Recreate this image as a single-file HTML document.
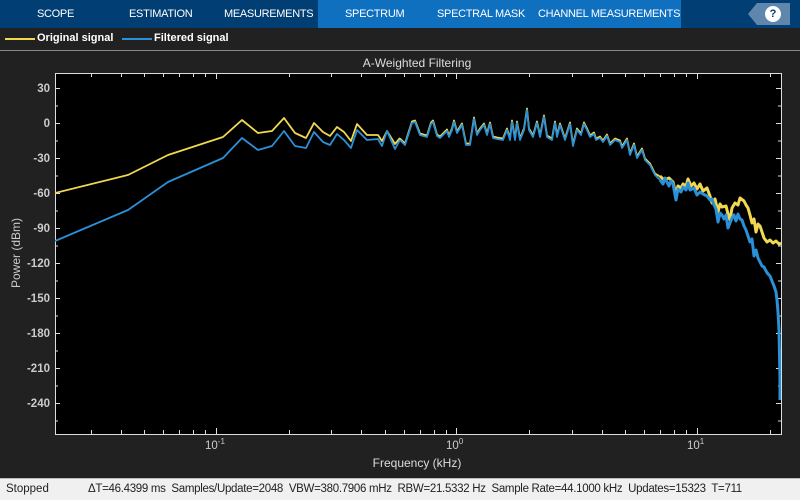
<!DOCTYPE html>
<html><head><meta charset="utf-8"><style>
*{margin:0;padding:0;box-sizing:border-box}
body{width:800px;height:500px;background:#212121;font-family:"Liberation Sans",sans-serif;overflow:hidden;position:relative}
.tb{position:absolute;left:0;top:0;width:800px;height:28px;background:#003e73}
.act{position:absolute;left:318px;top:0;width:363px;height:28px;background:#1070c0}
.tab{position:absolute;top:8px;color:#fff;font-size:11px;letter-spacing:-0.3px}
.help{position:absolute;left:757px;top:3px;width:33px;height:22px;background:#5f87ad}
.help:before{content:"";position:absolute;left:-9px;top:0;border-right:9px solid #5f87ad;border-top:11px solid transparent;border-bottom:11px solid transparent}
.q{position:absolute;left:8px;top:3px;width:16px;height:16px;border-radius:50%;background:#fff;color:#003e73;font-size:11px;font-weight:bold;text-align:center;line-height:16px}
.leg{position:absolute;top:32px;color:#fff;font-size:11px;font-weight:bold}
.sep{position:absolute;left:0;top:50px;width:800px;height:1px;background:#8a8a8a}
.status{position:absolute;left:0;top:478px;width:800px;height:22px;background:#f0f0f0;border-top:1px solid #bbb;font-size:11.5px;color:#222;white-space:nowrap}
</style></head><body>
<div class="tb"></div><div class="act"></div>
<div class="tab" style="left:37px">SCOPE</div>
<div class="tab" style="left:129px">ESTIMATION</div>
<div class="tab" style="left:224px">MEASUREMENTS</div>
<div class="tab" style="left:345px">SPECTRUM</div>
<div class="tab" style="left:437px">SPECTRAL MASK</div>
<div class="tab" style="left:538px">CHANNEL MEASUREMENTS</div>
<div class="help"><div class="q">?</div></div>
<div style="position:absolute;left:5px;top:38px;width:30px;height:2px;background:#f0d850"></div>
<div class="leg" style="left:37px">Original signal</div>
<div style="position:absolute;left:122px;top:38px;width:30px;height:2px;background:#2a90d8"></div>
<div class="leg" style="left:154px">Filtered signal</div>
<div class="sep"></div>
<svg width="800" height="478" style="position:absolute;left:0;top:0" font-family="Liberation Sans, sans-serif">
<text x="417" y="67" fill="#ddd" font-size="12" text-anchor="middle">A-Weighted Filtering</text>
<rect x="55" y="73" width="726" height="361" fill="#131313"/>
<g stroke="#4a4a4a" stroke-width="1">
<path d="M55 88.5H781M55 123.5H781M55 158.5H781M55 193.5H781M55 228.5H781M55 263.5H781M55 298.5H781M55 333.5H781M55 368.5H781M55 403.5H781M216.5 73V434M456.5 73V434M697.5 73V434"/>
</g>
<g stroke="#ddd" stroke-width="1">
<path d="M55.5 73V434.5H781.5V73M55 73.5H781"/>
<path d="M91.5 73v4M121.5 73v4M144.5 73v4M163.5 73v4M179.5 73v4M193.5 73v4M205.5 73v4M216.5 73v6M289.5 73v4M331.5 73v4M361.5 73v4M385.5 73v4M404.5 73v4M420.5 73v4M434.5 73v4M446.5 73v4M456.5 73v6M529.5 73v4M572.5 73v4M602.5 73v4M625.5 73v4M644.5 73v4M660.5 73v4M674.5 73v4M686.5 73v4M697.5 73v6M770.5 73v4"/>
<path d="M91.5 434v-4M121.5 434v-4M144.5 434v-4M163.5 434v-4M179.5 434v-4M193.5 434v-4M205.5 434v-4M216.5 434v-6M289.5 434v-4M331.5 434v-4M361.5 434v-4M385.5 434v-4M404.5 434v-4M420.5 434v-4M434.5 434v-4M446.5 434v-4M456.5 434v-6M529.5 434v-4M572.5 434v-4M602.5 434v-4M625.5 434v-4M644.5 434v-4M660.5 434v-4M674.5 434v-4M686.5 434v-4M697.5 434v-6M770.5 434v-4"/>
<path d="M55 88.5h5M55 106h3M55 123.5h5M55 141h3M55 158.5h5M55 176h3M55 193.5h5M55 211h3M55 228.5h5M55 246h3M55 263.5h5M55 281h3M55 298.5h5M55 316h3M55 333.5h5M55 351h3M55 368.5h5M55 386h3M55 403.5h5M55 421h3"/>
<path d="M781 88.5h-5M781 106h-3M781 123.5h-5M781 141h-3M781 158.5h-5M781 176h-3M781 193.5h-5M781 211h-3M781 228.5h-5M781 246h-3M781 263.5h-5M781 281h-3M781 298.5h-5M781 316h-3M781 333.5h-5M781 351h-3M781 368.5h-5M781 386h-3M781 403.5h-5M781 421h-3"/>
</g>
<g fill="#ccc" font-size="11.5" font-weight="bold" text-anchor="end">
<text x="50" y="92">30</text><text x="50" y="127">0</text><text x="50" y="162">-30</text><text x="50" y="197">-60</text><text x="50" y="232">-90</text><text x="50" y="267">-120</text><text x="50" y="302">-150</text><text x="50" y="337">-180</text><text x="50" y="372">-210</text><text x="50" y="407">-240</text>
</g>
<text transform="translate(20,253) rotate(-90)" fill="#ccc" font-size="12" text-anchor="middle">Power (dBm)</text>
<g fill="#ccc" font-size="11.5">
<text x="205" y="449">10<tspan font-size="8" dy="-5">-1</tspan></text>
<text x="446" y="449">10<tspan font-size="8" dy="-5">0</tspan></text>
<text x="687" y="449">10<tspan font-size="8" dy="-5">1</tspan></text>
</g>
<text x="417" y="467" fill="#ddd" font-size="12" text-anchor="middle">Frequency (kHz)</text>
<defs><clipPath id="c"><rect x="55" y="73" width="726" height="361"/></clipPath></defs>
<g clip-path="url(#c)" fill="none" stroke-width="1.8" stroke-linejoin="round">
<polyline stroke="#f0d850" points="55,193 128,175 168,155 223,137 242,120 258,133 272,131 284,118 295,133 306,138 314,123 323,132 330,136 337,127 344,132 351,141 357,124 367,135 378,135 382,141 387,131 395,144 400,138"/>
<polyline transform="translate(0,-1.5)" stroke="#f0d850" points="400,140 405,145 412,123 415,122 420,135 427,137 431,124 433,122 437,136 440,138 445,133 447,131 449,137 452,130 454,122 457,133 462,125 466,145 470,145 474,119 477,135 480,130 484,125 487,135 490,124 493,138 497,139 503,140 507,130 510,140 512,122 515,140 517,123 520,140 524,130 527,110 529,130 533,137 537,123 540,137 544,117 547,137 552,140 555,123 557,137 560,125 565,140 570,124 573,146 577,130 581,135 584,124 587,130 590,137 594,134 596,140 600,138 603,142 607,136 610,145 615,140 620,142 622,148 627,140 630,155 634,145 637,158 642,150 645,160 650,165 655,175 660,178"/>
<polyline stroke="#f0d850" stroke-width="3" points="660,176 664,180 669,178 673,182 676,195 678,186 681,188 683,184 686,186 688,179 691,186 694,183 697,189 700,184 703,191 707,188 710,196 712,203 715,199 718,212 720,204 722,207 726,206 728,214 730,220 732,208 735,203 738,205 740,198 744,201 746,205 748,208 750,215 752,223 754,219 756,232 758,224 760,226 762,232 764,238 767,242 770,240 773,243 776,241 779,244 781,243"/>
<polyline stroke="#2a90d8" points="55,241 128,210 168,182 223,158 242,138 258,150 272,146 284,131 295,146 306,148 314,132 323,142 330,145 337,134 344,140 351,148 357,130 367,140 378,139 382,146 387,131 395,149 400,140"/>
<polyline stroke="#2a90d8" points="400,140 405,145 412,123 415,122 420,135 427,137 431,124 433,122 437,136 440,138 445,133 447,131 449,137 452,130 454,122 457,133 462,125 466,145 470,145 474,119 477,135 480,130 484,125 487,135 490,124 493,138 497,139 503,140 507,130 510,140 512,122 515,140 517,123 520,140 524,130 527,110 529,130 533,137 537,123 540,137 544,117 547,137 552,140 555,123 557,137 560,125 565,140 570,124 573,146 577,130 581,135 584,124 587,130 590,137 594,134 596,140 600,138 603,142 607,136 610,145 615,140 620,142 622,148 627,140 630,155 634,145 637,158 642,150 645,160 650,165 655,175 660,180"/>
<polyline stroke="#2a90d8" stroke-width="3" points="660,180 663,184 665,178 669,186 671,181 673,184 676,200 678,189 681,192 683,187 686,190 688,183 690,190 694,188 697,195 700,192 703,194 707,196 710,200 712,199 714,205 716,209 718,222 720,213 722,215 724,219 726,215 728,228 730,223 732,218 734,215 736,221 738,214 740,219 742,220 744,226 746,230 748,236 750,242 752,239 754,256 756,250 758,258 760,262 762,266 764,267 766,271 768,274 770,276 772,281 774,286 776,292 777,300 778,312 779,330 780,380 780,400"/>
</g>
</svg>
<div class="status"><span style="position:absolute;left:6px;top:4px">Stopped</span><span style="position:absolute;left:88px;top:4px;letter-spacing:-0.3px">ΔT=46.4399 ms&nbsp; Samples/Update=2048&nbsp; VBW=380.7906 mHz&nbsp; RBW=21.5332 Hz&nbsp; Sample Rate=44.1000 kHz&nbsp; Updates=15323&nbsp; T=711</span></div>
</body></html>
